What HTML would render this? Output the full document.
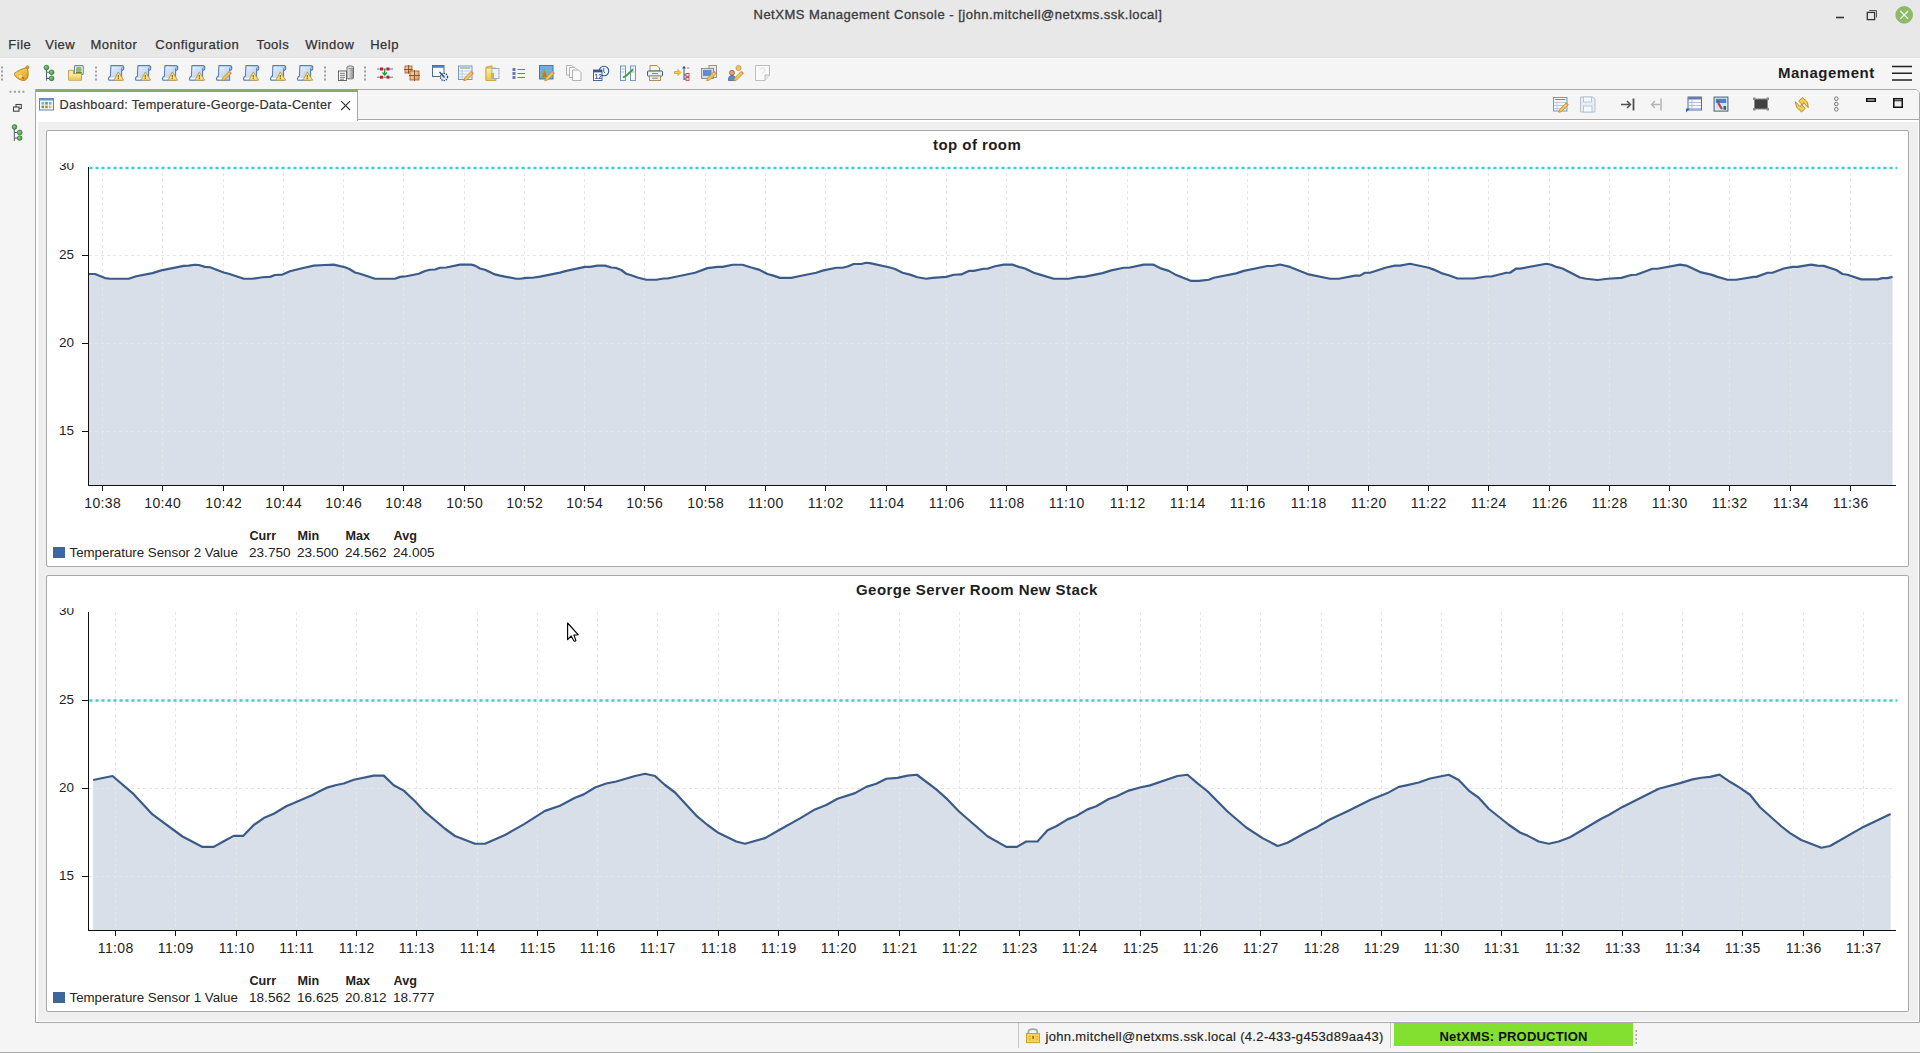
<!DOCTYPE html>
<html><head><meta charset="utf-8"><title>NetXMS</title>
<style>
*{margin:0;padding:0;box-sizing:border-box}
html,body{width:1920px;height:1053px;overflow:hidden;background:#f5f5f5;font-family:"Liberation Sans",sans-serif;color:#333}
.a{position:absolute}
.t{position:absolute;white-space:pre;line-height:1}
</style></head><body>

<div class="a" style="left:0;top:0;width:1920px;height:58px;background:#e8e8e8"></div>
<div class="t" style="left:753.5px;top:8.4px;font-size:13px;color:#3d3d3d;-webkit-text-stroke:0.35px #3d3d3d;letter-spacing:0.5px">NetXMS Management Console - [john.mitchell@netxms.ssk.local]</div>
<div class="t" style="left:8.3px;top:37.6px;font-size:13px;letter-spacing:0.5px;color:#333;-webkit-text-stroke:0.25px #333">File</div>
<div class="t" style="left:45.3px;top:37.6px;font-size:13px;letter-spacing:0.5px;color:#333;-webkit-text-stroke:0.25px #333">View</div>
<div class="t" style="left:90.4px;top:37.6px;font-size:13px;letter-spacing:0.5px;color:#333;-webkit-text-stroke:0.25px #333">Monitor</div>
<div class="t" style="left:155.3px;top:37.6px;font-size:13px;letter-spacing:0.5px;color:#333;-webkit-text-stroke:0.25px #333">Configuration</div>
<div class="t" style="left:256.4px;top:37.6px;font-size:13px;letter-spacing:0.5px;color:#333;-webkit-text-stroke:0.25px #333">Tools</div>
<div class="t" style="left:305.2px;top:37.6px;font-size:13px;letter-spacing:0.5px;color:#333;-webkit-text-stroke:0.25px #333">Window</div>
<div class="t" style="left:370.2px;top:37.6px;font-size:13px;letter-spacing:0.5px;color:#333;-webkit-text-stroke:0.25px #333">Help</div>
<div class="a" style="left:0;top:58px;width:1920px;height:31px;background:#f5f5f5"></div>
<div class="a" style="left:0;top:57px;width:1920px;height:1px;background:#e4e4e4"></div>
<div class="a" style="left:0;top:58px;width:1920px;height:1px;background:#f9f9f9"></div>
<div class="t" style="left:1778px;top:65px;font-size:15px;font-weight:bold;color:#1e1e1e;letter-spacing:0.5px">Management</div>
<div class="a" style="left:35px;top:89px;width:1885px;height:934px;border:1px solid #a8a8a8;border-radius:0 5px 0 0;background:#efefef"></div>
<div class="a" style="left:36px;top:90px;width:1883px;height:30px;background:#f5f5f5;border-bottom:1px solid #a8a8a8;border-radius:0 4px 0 0"></div>
<div class="a" style="left:36px;top:120px;width:1882px;height:2px;background:#fff"></div>
<div class="a" style="left:36px;top:120px;width:2px;height:902px;background:#fff"></div>
<div class="a" style="left:1918px;top:120px;width:1px;height:902px;background:#fff"></div>
<div class="a" style="left:36px;top:1021px;width:1883px;height:1px;background:#fff"></div>
<div class="a" style="left:36px;top:90px;width:322px;height:31px;background:#fff;border-right:1px solid #a8a8a8"></div>
<div class="a" style="left:36px;top:89px;width:322px;height:3px;background:#8aab6c"></div>
<div class="t" style="left:59.5px;top:99px;font-size:12.7px;letter-spacing:0.3px;color:#333;-webkit-text-stroke:0.2px #333">Dashboard: Temperature-George-Data-Center</div>
<div class="a" style="left:46px;top:130px;width:1863px;height:437px;background:#fff;border:1px solid #a9a9a9;border-radius:2px"></div>
<div class="t" style="left:933px;top:136.5px;font-size:15px;font-weight:bold;color:#1e1e1e;letter-spacing:0.45px">top of room</div>
<svg class="a" style="left:0;top:0" width="1920" height="1053" viewBox="0 0 1920 1053"><path d="M89,485 L89.00,274.00 L95.00,274.00 L105.00,278.10 L110.00,278.75 L128.75,278.75 L136.25,276.25 L152.50,273.10 L161.25,270.40 L183.75,265.90 L188.75,265.60 L195.00,264.75 L198.75,265.00 L205.00,266.90 L210.00,267.25 L223.75,272.50 L228.75,273.75 L243.75,278.75 L252.50,278.75 L262.50,277.25 L270.00,276.90 L275.00,275.00 L282.50,274.60 L290.00,271.25 L300.00,268.75 L313.75,265.60 L325.00,265.00 L333.75,264.60 L345.00,267.25 L349.40,269.00 L355.00,272.50 L360.00,273.75 L375.00,278.75 L395.00,278.75 L400.00,276.90 L406.25,276.25 L418.75,273.75 L425.00,271.00 L430.00,269.75 L435.00,269.50 L440.00,267.75 L446.25,267.50 L460.00,264.60 L471.25,264.60 L475.00,265.60 L480.00,268.50 L485.00,269.75 L495.00,274.40 L500.00,275.60 L516.25,278.75 L520.00,278.75 L526.25,277.90 L532.50,277.75 L540.00,276.60 L560.00,272.60 L566.25,270.90 L585.00,266.90 L590.00,266.90 L597.50,265.60 L605.00,265.60 L611.25,267.50 L616.25,267.90 L621.25,270.00 L626.25,273.75 L631.25,275.25 L637.50,277.50 L646.25,279.75 L656.25,279.75 L663.75,278.50 L667.50,278.50 L695.00,272.75 L707.50,268.10 L717.50,266.90 L722.50,266.90 L732.50,264.75 L742.50,264.75 L751.25,267.50 L758.75,269.60 L767.50,274.00 L772.50,275.40 L780.00,277.90 L791.25,277.90 L800.00,276.00 L816.25,272.75 L822.50,270.60 L836.25,267.75 L842.50,267.75 L847.50,266.50 L853.75,264.00 L861.25,264.00 L866.25,262.75 L870.00,263.10 L890.00,267.50 L895.00,269.00 L902.50,272.75 L910.00,274.60 L917.50,277.25 L926.25,278.75 L932.50,277.90 L946.25,276.90 L953.75,274.75 L961.25,274.40 L968.75,270.90 L973.75,270.90 L983.75,268.75 L987.50,268.75 L995.00,266.25 L1003.75,264.60 L1012.50,264.60 L1018.75,266.90 L1025.00,268.50 L1033.75,272.75 L1040.00,274.60 L1053.75,278.75 L1068.75,278.75 L1078.75,276.90 L1083.75,276.90 L1102.50,273.10 L1111.25,270.40 L1123.75,267.75 L1128.75,267.75 L1143.75,264.60 L1153.10,264.60 L1160.00,268.10 L1168.75,270.90 L1175.00,274.40 L1191.25,280.90 L1198.75,280.90 L1208.75,279.75 L1213.75,277.75 L1236.25,273.40 L1243.75,270.90 L1267.50,266.00 L1272.50,266.00 L1280.00,264.50 L1290.00,266.90 L1308.75,274.40 L1330.00,278.75 L1338.75,278.75 L1355.00,275.60 L1360.00,275.60 L1365.00,272.75 L1370.00,272.75 L1386.25,267.50 L1395.00,265.60 L1400.00,265.60 L1410.00,263.75 L1428.75,267.75 L1433.75,269.60 L1441.25,273.10 L1448.75,275.25 L1457.50,278.50 L1473.75,278.50 L1486.25,276.50 L1491.25,276.50 L1506.25,272.75 L1510.00,272.75 L1516.25,268.50 L1520.00,268.70 L1546.25,263.75 L1551.25,264.75 L1556.25,266.90 L1562.50,268.50 L1580.00,277.50 L1586.25,278.75 L1597.50,280.00 L1607.50,278.75 L1621.25,277.90 L1631.25,275.00 L1636.25,274.75 L1652.50,268.75 L1657.50,268.75 L1680.00,264.60 L1686.25,265.60 L1701.25,272.40 L1711.25,274.60 L1717.50,276.90 L1727.50,279.75 L1736.25,279.75 L1753.75,276.90 L1756.25,276.90 L1767.50,272.75 L1772.50,272.75 L1783.75,268.50 L1792.50,266.90 L1797.50,266.90 L1805.00,265.60 L1811.25,264.60 L1817.50,265.60 L1823.75,265.90 L1836.25,270.00 L1842.50,274.00 L1847.50,274.75 L1861.25,279.40 L1877.50,279.40 L1882.50,278.10 L1887.50,278.10 L1892.50,276.90 L1892.5,485 Z" fill="#d8dfe9" stroke="none"/><line x1="89" y1="431.5" x2="1893" y2="431.5" stroke="#e6e6e6" stroke-width="1" stroke-dasharray="3,3"/><line x1="89" y1="343.5" x2="1893" y2="343.5" stroke="#e6e6e6" stroke-width="1" stroke-dasharray="3,3"/><line x1="89" y1="255.5" x2="1893" y2="255.5" stroke="#e6e6e6" stroke-width="1" stroke-dasharray="3,3"/><line x1="102.5" y1="167" x2="102.5" y2="485" stroke="#e6e6e6" stroke-width="1" stroke-dasharray="3,3"/><line x1="162.5" y1="167" x2="162.5" y2="485" stroke="#e6e6e6" stroke-width="1" stroke-dasharray="3,3"/><line x1="223.5" y1="167" x2="223.5" y2="485" stroke="#e6e6e6" stroke-width="1" stroke-dasharray="3,3"/><line x1="283.5" y1="167" x2="283.5" y2="485" stroke="#e6e6e6" stroke-width="1" stroke-dasharray="3,3"/><line x1="343.5" y1="167" x2="343.5" y2="485" stroke="#e6e6e6" stroke-width="1" stroke-dasharray="3,3"/><line x1="403.5" y1="167" x2="403.5" y2="485" stroke="#e6e6e6" stroke-width="1" stroke-dasharray="3,3"/><line x1="464.5" y1="167" x2="464.5" y2="485" stroke="#e6e6e6" stroke-width="1" stroke-dasharray="3,3"/><line x1="524.5" y1="167" x2="524.5" y2="485" stroke="#e6e6e6" stroke-width="1" stroke-dasharray="3,3"/><line x1="584.5" y1="167" x2="584.5" y2="485" stroke="#e6e6e6" stroke-width="1" stroke-dasharray="3,3"/><line x1="644.5" y1="167" x2="644.5" y2="485" stroke="#e6e6e6" stroke-width="1" stroke-dasharray="3,3"/><line x1="705.5" y1="167" x2="705.5" y2="485" stroke="#e6e6e6" stroke-width="1" stroke-dasharray="3,3"/><line x1="765.5" y1="167" x2="765.5" y2="485" stroke="#e6e6e6" stroke-width="1" stroke-dasharray="3,3"/><line x1="825.5" y1="167" x2="825.5" y2="485" stroke="#e6e6e6" stroke-width="1" stroke-dasharray="3,3"/><line x1="886.5" y1="167" x2="886.5" y2="485" stroke="#e6e6e6" stroke-width="1" stroke-dasharray="3,3"/><line x1="946.5" y1="167" x2="946.5" y2="485" stroke="#e6e6e6" stroke-width="1" stroke-dasharray="3,3"/><line x1="1006.5" y1="167" x2="1006.5" y2="485" stroke="#e6e6e6" stroke-width="1" stroke-dasharray="3,3"/><line x1="1066.5" y1="167" x2="1066.5" y2="485" stroke="#e6e6e6" stroke-width="1" stroke-dasharray="3,3"/><line x1="1127.5" y1="167" x2="1127.5" y2="485" stroke="#e6e6e6" stroke-width="1" stroke-dasharray="3,3"/><line x1="1187.5" y1="167" x2="1187.5" y2="485" stroke="#e6e6e6" stroke-width="1" stroke-dasharray="3,3"/><line x1="1247.5" y1="167" x2="1247.5" y2="485" stroke="#e6e6e6" stroke-width="1" stroke-dasharray="3,3"/><line x1="1308.5" y1="167" x2="1308.5" y2="485" stroke="#e6e6e6" stroke-width="1" stroke-dasharray="3,3"/><line x1="1368.5" y1="167" x2="1368.5" y2="485" stroke="#e6e6e6" stroke-width="1" stroke-dasharray="3,3"/><line x1="1428.5" y1="167" x2="1428.5" y2="485" stroke="#e6e6e6" stroke-width="1" stroke-dasharray="3,3"/><line x1="1488.5" y1="167" x2="1488.5" y2="485" stroke="#e6e6e6" stroke-width="1" stroke-dasharray="3,3"/><line x1="1549.5" y1="167" x2="1549.5" y2="485" stroke="#e6e6e6" stroke-width="1" stroke-dasharray="3,3"/><line x1="1609.5" y1="167" x2="1609.5" y2="485" stroke="#e6e6e6" stroke-width="1" stroke-dasharray="3,3"/><line x1="1669.5" y1="167" x2="1669.5" y2="485" stroke="#e6e6e6" stroke-width="1" stroke-dasharray="3,3"/><line x1="1729.5" y1="167" x2="1729.5" y2="485" stroke="#e6e6e6" stroke-width="1" stroke-dasharray="3,3"/><line x1="1790.5" y1="167" x2="1790.5" y2="485" stroke="#e6e6e6" stroke-width="1" stroke-dasharray="3,3"/><line x1="1850.5" y1="167" x2="1850.5" y2="485" stroke="#e6e6e6" stroke-width="1" stroke-dasharray="3,3"/><path d="M89.00,274.00 L95.00,274.00 L105.00,278.10 L110.00,278.75 L128.75,278.75 L136.25,276.25 L152.50,273.10 L161.25,270.40 L183.75,265.90 L188.75,265.60 L195.00,264.75 L198.75,265.00 L205.00,266.90 L210.00,267.25 L223.75,272.50 L228.75,273.75 L243.75,278.75 L252.50,278.75 L262.50,277.25 L270.00,276.90 L275.00,275.00 L282.50,274.60 L290.00,271.25 L300.00,268.75 L313.75,265.60 L325.00,265.00 L333.75,264.60 L345.00,267.25 L349.40,269.00 L355.00,272.50 L360.00,273.75 L375.00,278.75 L395.00,278.75 L400.00,276.90 L406.25,276.25 L418.75,273.75 L425.00,271.00 L430.00,269.75 L435.00,269.50 L440.00,267.75 L446.25,267.50 L460.00,264.60 L471.25,264.60 L475.00,265.60 L480.00,268.50 L485.00,269.75 L495.00,274.40 L500.00,275.60 L516.25,278.75 L520.00,278.75 L526.25,277.90 L532.50,277.75 L540.00,276.60 L560.00,272.60 L566.25,270.90 L585.00,266.90 L590.00,266.90 L597.50,265.60 L605.00,265.60 L611.25,267.50 L616.25,267.90 L621.25,270.00 L626.25,273.75 L631.25,275.25 L637.50,277.50 L646.25,279.75 L656.25,279.75 L663.75,278.50 L667.50,278.50 L695.00,272.75 L707.50,268.10 L717.50,266.90 L722.50,266.90 L732.50,264.75 L742.50,264.75 L751.25,267.50 L758.75,269.60 L767.50,274.00 L772.50,275.40 L780.00,277.90 L791.25,277.90 L800.00,276.00 L816.25,272.75 L822.50,270.60 L836.25,267.75 L842.50,267.75 L847.50,266.50 L853.75,264.00 L861.25,264.00 L866.25,262.75 L870.00,263.10 L890.00,267.50 L895.00,269.00 L902.50,272.75 L910.00,274.60 L917.50,277.25 L926.25,278.75 L932.50,277.90 L946.25,276.90 L953.75,274.75 L961.25,274.40 L968.75,270.90 L973.75,270.90 L983.75,268.75 L987.50,268.75 L995.00,266.25 L1003.75,264.60 L1012.50,264.60 L1018.75,266.90 L1025.00,268.50 L1033.75,272.75 L1040.00,274.60 L1053.75,278.75 L1068.75,278.75 L1078.75,276.90 L1083.75,276.90 L1102.50,273.10 L1111.25,270.40 L1123.75,267.75 L1128.75,267.75 L1143.75,264.60 L1153.10,264.60 L1160.00,268.10 L1168.75,270.90 L1175.00,274.40 L1191.25,280.90 L1198.75,280.90 L1208.75,279.75 L1213.75,277.75 L1236.25,273.40 L1243.75,270.90 L1267.50,266.00 L1272.50,266.00 L1280.00,264.50 L1290.00,266.90 L1308.75,274.40 L1330.00,278.75 L1338.75,278.75 L1355.00,275.60 L1360.00,275.60 L1365.00,272.75 L1370.00,272.75 L1386.25,267.50 L1395.00,265.60 L1400.00,265.60 L1410.00,263.75 L1428.75,267.75 L1433.75,269.60 L1441.25,273.10 L1448.75,275.25 L1457.50,278.50 L1473.75,278.50 L1486.25,276.50 L1491.25,276.50 L1506.25,272.75 L1510.00,272.75 L1516.25,268.50 L1520.00,268.70 L1546.25,263.75 L1551.25,264.75 L1556.25,266.90 L1562.50,268.50 L1580.00,277.50 L1586.25,278.75 L1597.50,280.00 L1607.50,278.75 L1621.25,277.90 L1631.25,275.00 L1636.25,274.75 L1652.50,268.75 L1657.50,268.75 L1680.00,264.60 L1686.25,265.60 L1701.25,272.40 L1711.25,274.60 L1717.50,276.90 L1727.50,279.75 L1736.25,279.75 L1753.75,276.90 L1756.25,276.90 L1767.50,272.75 L1772.50,272.75 L1783.75,268.50 L1792.50,266.90 L1797.50,266.90 L1805.00,265.60 L1811.25,264.60 L1817.50,265.60 L1823.75,265.90 L1836.25,270.00 L1842.50,274.00 L1847.50,274.75 L1861.25,279.40 L1877.50,279.40 L1882.50,278.10 L1887.50,278.10 L1892.50,276.90" fill="none" stroke="#3a5b88" stroke-width="2.2" stroke-linejoin="round"/><line x1="89.5" y1="168" x2="1897" y2="168" stroke="#30d2d6" stroke-width="2.4" stroke-dasharray="3,3"/><line x1="88.5" y1="167" x2="88.5" y2="486" stroke="#111" stroke-width="1"/><line x1="88" y1="485.5" x2="1896" y2="485.5" stroke="#111" stroke-width="1"/><line x1="82" y1="431.5" x2="88" y2="431.5" stroke="#111" stroke-width="1"/><line x1="82" y1="343.5" x2="88" y2="343.5" stroke="#111" stroke-width="1"/><line x1="82" y1="255.5" x2="88" y2="255.5" stroke="#111" stroke-width="1"/><line x1="102.5" y1="485" x2="102.5" y2="491" stroke="#111" stroke-width="1"/><line x1="162.5" y1="485" x2="162.5" y2="491" stroke="#111" stroke-width="1"/><line x1="223.5" y1="485" x2="223.5" y2="491" stroke="#111" stroke-width="1"/><line x1="283.5" y1="485" x2="283.5" y2="491" stroke="#111" stroke-width="1"/><line x1="343.5" y1="485" x2="343.5" y2="491" stroke="#111" stroke-width="1"/><line x1="403.5" y1="485" x2="403.5" y2="491" stroke="#111" stroke-width="1"/><line x1="464.5" y1="485" x2="464.5" y2="491" stroke="#111" stroke-width="1"/><line x1="524.5" y1="485" x2="524.5" y2="491" stroke="#111" stroke-width="1"/><line x1="584.5" y1="485" x2="584.5" y2="491" stroke="#111" stroke-width="1"/><line x1="644.5" y1="485" x2="644.5" y2="491" stroke="#111" stroke-width="1"/><line x1="705.5" y1="485" x2="705.5" y2="491" stroke="#111" stroke-width="1"/><line x1="765.5" y1="485" x2="765.5" y2="491" stroke="#111" stroke-width="1"/><line x1="825.5" y1="485" x2="825.5" y2="491" stroke="#111" stroke-width="1"/><line x1="886.5" y1="485" x2="886.5" y2="491" stroke="#111" stroke-width="1"/><line x1="946.5" y1="485" x2="946.5" y2="491" stroke="#111" stroke-width="1"/><line x1="1006.5" y1="485" x2="1006.5" y2="491" stroke="#111" stroke-width="1"/><line x1="1066.5" y1="485" x2="1066.5" y2="491" stroke="#111" stroke-width="1"/><line x1="1127.5" y1="485" x2="1127.5" y2="491" stroke="#111" stroke-width="1"/><line x1="1187.5" y1="485" x2="1187.5" y2="491" stroke="#111" stroke-width="1"/><line x1="1247.5" y1="485" x2="1247.5" y2="491" stroke="#111" stroke-width="1"/><line x1="1308.5" y1="485" x2="1308.5" y2="491" stroke="#111" stroke-width="1"/><line x1="1368.5" y1="485" x2="1368.5" y2="491" stroke="#111" stroke-width="1"/><line x1="1428.5" y1="485" x2="1428.5" y2="491" stroke="#111" stroke-width="1"/><line x1="1488.5" y1="485" x2="1488.5" y2="491" stroke="#111" stroke-width="1"/><line x1="1549.5" y1="485" x2="1549.5" y2="491" stroke="#111" stroke-width="1"/><line x1="1609.5" y1="485" x2="1609.5" y2="491" stroke="#111" stroke-width="1"/><line x1="1669.5" y1="485" x2="1669.5" y2="491" stroke="#111" stroke-width="1"/><line x1="1729.5" y1="485" x2="1729.5" y2="491" stroke="#111" stroke-width="1"/><line x1="1790.5" y1="485" x2="1790.5" y2="491" stroke="#111" stroke-width="1"/><line x1="1850.5" y1="485" x2="1850.5" y2="491" stroke="#111" stroke-width="1"/></svg>
<div class="t" style="left:59px;top:424.0px;font-size:13.5px;color:#1e1e1e">15</div>
<div class="t" style="left:59px;top:336.0px;font-size:13.5px;color:#1e1e1e">20</div>
<div class="t" style="left:59px;top:248.0px;font-size:13.5px;color:#1e1e1e">25</div>
<div class="a" style="left:55px;top:162.5px;width:30px;height:12px;overflow:hidden"><div class="t" style="left:4px;top:-3.6px;font-size:13.5px;color:#1e1e1e">30</div></div>
<div class="t" style="left:82.5px;top:496px;width:40px;text-align:center;font-size:14px;letter-spacing:0.35px;text-indent:0.35px;color:#1e1e1e">10:38</div>
<div class="t" style="left:142.5px;top:496px;width:40px;text-align:center;font-size:14px;letter-spacing:0.35px;text-indent:0.35px;color:#1e1e1e">10:40</div>
<div class="t" style="left:203.5px;top:496px;width:40px;text-align:center;font-size:14px;letter-spacing:0.35px;text-indent:0.35px;color:#1e1e1e">10:42</div>
<div class="t" style="left:263.5px;top:496px;width:40px;text-align:center;font-size:14px;letter-spacing:0.35px;text-indent:0.35px;color:#1e1e1e">10:44</div>
<div class="t" style="left:323.5px;top:496px;width:40px;text-align:center;font-size:14px;letter-spacing:0.35px;text-indent:0.35px;color:#1e1e1e">10:46</div>
<div class="t" style="left:383.5px;top:496px;width:40px;text-align:center;font-size:14px;letter-spacing:0.35px;text-indent:0.35px;color:#1e1e1e">10:48</div>
<div class="t" style="left:444.5px;top:496px;width:40px;text-align:center;font-size:14px;letter-spacing:0.35px;text-indent:0.35px;color:#1e1e1e">10:50</div>
<div class="t" style="left:504.5px;top:496px;width:40px;text-align:center;font-size:14px;letter-spacing:0.35px;text-indent:0.35px;color:#1e1e1e">10:52</div>
<div class="t" style="left:564.5px;top:496px;width:40px;text-align:center;font-size:14px;letter-spacing:0.35px;text-indent:0.35px;color:#1e1e1e">10:54</div>
<div class="t" style="left:624.5px;top:496px;width:40px;text-align:center;font-size:14px;letter-spacing:0.35px;text-indent:0.35px;color:#1e1e1e">10:56</div>
<div class="t" style="left:685.5px;top:496px;width:40px;text-align:center;font-size:14px;letter-spacing:0.35px;text-indent:0.35px;color:#1e1e1e">10:58</div>
<div class="t" style="left:745.5px;top:496px;width:40px;text-align:center;font-size:14px;letter-spacing:0.35px;text-indent:0.35px;color:#1e1e1e">11:00</div>
<div class="t" style="left:805.5px;top:496px;width:40px;text-align:center;font-size:14px;letter-spacing:0.35px;text-indent:0.35px;color:#1e1e1e">11:02</div>
<div class="t" style="left:866.5px;top:496px;width:40px;text-align:center;font-size:14px;letter-spacing:0.35px;text-indent:0.35px;color:#1e1e1e">11:04</div>
<div class="t" style="left:926.5px;top:496px;width:40px;text-align:center;font-size:14px;letter-spacing:0.35px;text-indent:0.35px;color:#1e1e1e">11:06</div>
<div class="t" style="left:986.5px;top:496px;width:40px;text-align:center;font-size:14px;letter-spacing:0.35px;text-indent:0.35px;color:#1e1e1e">11:08</div>
<div class="t" style="left:1046.5px;top:496px;width:40px;text-align:center;font-size:14px;letter-spacing:0.35px;text-indent:0.35px;color:#1e1e1e">11:10</div>
<div class="t" style="left:1107.5px;top:496px;width:40px;text-align:center;font-size:14px;letter-spacing:0.35px;text-indent:0.35px;color:#1e1e1e">11:12</div>
<div class="t" style="left:1167.5px;top:496px;width:40px;text-align:center;font-size:14px;letter-spacing:0.35px;text-indent:0.35px;color:#1e1e1e">11:14</div>
<div class="t" style="left:1227.5px;top:496px;width:40px;text-align:center;font-size:14px;letter-spacing:0.35px;text-indent:0.35px;color:#1e1e1e">11:16</div>
<div class="t" style="left:1288.5px;top:496px;width:40px;text-align:center;font-size:14px;letter-spacing:0.35px;text-indent:0.35px;color:#1e1e1e">11:18</div>
<div class="t" style="left:1348.5px;top:496px;width:40px;text-align:center;font-size:14px;letter-spacing:0.35px;text-indent:0.35px;color:#1e1e1e">11:20</div>
<div class="t" style="left:1408.5px;top:496px;width:40px;text-align:center;font-size:14px;letter-spacing:0.35px;text-indent:0.35px;color:#1e1e1e">11:22</div>
<div class="t" style="left:1468.5px;top:496px;width:40px;text-align:center;font-size:14px;letter-spacing:0.35px;text-indent:0.35px;color:#1e1e1e">11:24</div>
<div class="t" style="left:1529.5px;top:496px;width:40px;text-align:center;font-size:14px;letter-spacing:0.35px;text-indent:0.35px;color:#1e1e1e">11:26</div>
<div class="t" style="left:1589.5px;top:496px;width:40px;text-align:center;font-size:14px;letter-spacing:0.35px;text-indent:0.35px;color:#1e1e1e">11:28</div>
<div class="t" style="left:1649.5px;top:496px;width:40px;text-align:center;font-size:14px;letter-spacing:0.35px;text-indent:0.35px;color:#1e1e1e">11:30</div>
<div class="t" style="left:1709.5px;top:496px;width:40px;text-align:center;font-size:14px;letter-spacing:0.35px;text-indent:0.35px;color:#1e1e1e">11:32</div>
<div class="t" style="left:1770.5px;top:496px;width:40px;text-align:center;font-size:14px;letter-spacing:0.35px;text-indent:0.35px;color:#1e1e1e">11:34</div>
<div class="t" style="left:1830.5px;top:496px;width:40px;text-align:center;font-size:14px;letter-spacing:0.35px;text-indent:0.35px;color:#1e1e1e">11:36</div>
<div class="a" style="left:53px;top:547px;width:12px;height:11px;background:#3d679c"></div>
<div class="t" style="left:69.5px;top:546px;font-size:13.3px;color:#222">Temperature Sensor 2 Value</div>
<div class="t" style="left:249.5px;top:530px;font-size:12.6px;font-weight:bold;color:#222">Curr</div>
<div class="t" style="left:249.0px;top:546px;font-size:13.6px;color:#222">23.750</div>
<div class="t" style="left:297.5px;top:530px;font-size:12.6px;font-weight:bold;color:#222">Min</div>
<div class="t" style="left:297.0px;top:546px;font-size:13.6px;color:#222">23.500</div>
<div class="t" style="left:345.5px;top:530px;font-size:12.6px;font-weight:bold;color:#222">Max</div>
<div class="t" style="left:345.0px;top:546px;font-size:13.6px;color:#222">24.562</div>
<div class="t" style="left:393.5px;top:530px;font-size:12.6px;font-weight:bold;color:#222">Avg</div>
<div class="t" style="left:393.0px;top:546px;font-size:13.6px;color:#222">24.005</div>
<div class="a" style="left:46px;top:575px;width:1863px;height:437px;background:#fff;border:1px solid #a9a9a9;border-radius:2px"></div>
<div class="t" style="left:856px;top:581.5px;font-size:15px;font-weight:bold;color:#1e1e1e;letter-spacing:0.45px">George Server Room New Stack</div>
<svg class="a" style="left:0;top:0" width="1920" height="1053" viewBox="0 0 1920 1053"><path d="M93.1,930 L93.10,780.00 L112.50,776.00 L132.50,793.10 L152.50,814.40 L157.50,818.10 L182.50,836.50 L202.50,846.90 L213.75,846.90 L223.75,841.25 L233.75,835.90 L243.10,835.90 L253.75,825.00 L263.75,818.10 L273.75,813.75 L286.25,806.25 L296.25,801.90 L312.50,795.00 L320.00,791.10 L326.25,787.90 L336.25,785.00 L343.75,783.50 L353.75,779.75 L373.75,775.60 L383.75,775.60 L393.75,785.25 L403.75,790.60 L415.00,801.25 L425.00,811.90 L445.00,828.75 L455.00,836.00 L475.00,843.75 L485.00,843.75 L505.00,835.00 L523.75,824.40 L545.00,810.90 L560.00,805.70 L575.00,797.75 L583.75,794.40 L595.00,787.50 L606.25,783.50 L616.25,781.50 L635.00,776.00 L645.00,773.75 L655.00,776.00 L665.00,785.00 L675.00,792.50 L696.25,815.60 L707.50,825.00 L718.75,833.10 L736.25,841.50 L745.00,843.75 L765.00,838.10 L778.75,830.25 L800.00,818.40 L815.00,809.40 L826.25,805.00 L837.50,798.75 L855.00,793.10 L866.25,786.90 L876.25,783.75 L886.25,778.75 L897.50,777.90 L907.50,775.60 L916.90,774.75 L936.25,789.40 L947.50,799.40 L958.75,811.25 L987.50,836.25 L1006.25,846.90 L1016.90,846.90 L1026.25,841.50 L1037.50,841.50 L1040.00,838.60 L1047.50,830.25 L1056.25,826.25 L1067.50,819.40 L1076.25,816.00 L1087.50,809.40 L1096.25,806.25 L1108.75,799.00 L1116.25,796.50 L1128.75,790.60 L1140.00,787.50 L1150.00,785.40 L1177.50,776.00 L1187.50,774.75 L1198.75,784.40 L1207.50,791.25 L1227.50,811.50 L1246.25,827.50 L1262.50,838.10 L1277.50,846.00 L1280.00,845.30 L1287.50,842.75 L1308.75,831.00 L1317.50,826.90 L1328.75,820.00 L1347.50,811.25 L1370.00,800.00 L1387.50,793.10 L1398.75,786.90 L1405.00,785.60 L1418.75,782.50 L1430.00,778.50 L1448.75,774.75 L1458.75,780.00 L1468.75,790.60 L1478.75,797.75 L1488.75,808.75 L1508.75,824.75 L1520.00,832.50 L1527.50,835.60 L1538.75,841.50 L1548.75,843.75 L1558.75,841.50 L1570.00,837.25 L1601.25,818.75 L1608.75,815.00 L1622.50,806.90 L1658.75,788.75 L1680.00,783.10 L1692.50,779.40 L1701.25,777.75 L1710.00,776.90 L1719.40,774.60 L1730.00,781.80 L1740.00,787.90 L1750.00,794.75 L1760.00,807.20 L1781.25,826.25 L1790.00,833.10 L1801.25,840.00 L1821.25,847.75 L1830.00,846.00 L1861.25,828.10 L1890.60,814.00 L1890.6,930 Z" fill="#d8dfe9" stroke="none"/><line x1="89" y1="876.5" x2="1893" y2="876.5" stroke="#e6e6e6" stroke-width="1" stroke-dasharray="3,3"/><line x1="89" y1="788.5" x2="1893" y2="788.5" stroke="#e6e6e6" stroke-width="1" stroke-dasharray="3,3"/><line x1="89" y1="700.5" x2="1893" y2="700.5" stroke="#e6e6e6" stroke-width="1" stroke-dasharray="3,3"/><line x1="115.5" y1="612" x2="115.5" y2="930" stroke="#e6e6e6" stroke-width="1" stroke-dasharray="3,3"/><line x1="175.5" y1="612" x2="175.5" y2="930" stroke="#e6e6e6" stroke-width="1" stroke-dasharray="3,3"/><line x1="236.5" y1="612" x2="236.5" y2="930" stroke="#e6e6e6" stroke-width="1" stroke-dasharray="3,3"/><line x1="296.5" y1="612" x2="296.5" y2="930" stroke="#e6e6e6" stroke-width="1" stroke-dasharray="3,3"/><line x1="356.5" y1="612" x2="356.5" y2="930" stroke="#e6e6e6" stroke-width="1" stroke-dasharray="3,3"/><line x1="416.5" y1="612" x2="416.5" y2="930" stroke="#e6e6e6" stroke-width="1" stroke-dasharray="3,3"/><line x1="477.5" y1="612" x2="477.5" y2="930" stroke="#e6e6e6" stroke-width="1" stroke-dasharray="3,3"/><line x1="537.5" y1="612" x2="537.5" y2="930" stroke="#e6e6e6" stroke-width="1" stroke-dasharray="3,3"/><line x1="597.5" y1="612" x2="597.5" y2="930" stroke="#e6e6e6" stroke-width="1" stroke-dasharray="3,3"/><line x1="657.5" y1="612" x2="657.5" y2="930" stroke="#e6e6e6" stroke-width="1" stroke-dasharray="3,3"/><line x1="718.5" y1="612" x2="718.5" y2="930" stroke="#e6e6e6" stroke-width="1" stroke-dasharray="3,3"/><line x1="778.5" y1="612" x2="778.5" y2="930" stroke="#e6e6e6" stroke-width="1" stroke-dasharray="3,3"/><line x1="838.5" y1="612" x2="838.5" y2="930" stroke="#e6e6e6" stroke-width="1" stroke-dasharray="3,3"/><line x1="899.5" y1="612" x2="899.5" y2="930" stroke="#e6e6e6" stroke-width="1" stroke-dasharray="3,3"/><line x1="959.5" y1="612" x2="959.5" y2="930" stroke="#e6e6e6" stroke-width="1" stroke-dasharray="3,3"/><line x1="1019.5" y1="612" x2="1019.5" y2="930" stroke="#e6e6e6" stroke-width="1" stroke-dasharray="3,3"/><line x1="1079.5" y1="612" x2="1079.5" y2="930" stroke="#e6e6e6" stroke-width="1" stroke-dasharray="3,3"/><line x1="1140.5" y1="612" x2="1140.5" y2="930" stroke="#e6e6e6" stroke-width="1" stroke-dasharray="3,3"/><line x1="1200.5" y1="612" x2="1200.5" y2="930" stroke="#e6e6e6" stroke-width="1" stroke-dasharray="3,3"/><line x1="1260.5" y1="612" x2="1260.5" y2="930" stroke="#e6e6e6" stroke-width="1" stroke-dasharray="3,3"/><line x1="1321.5" y1="612" x2="1321.5" y2="930" stroke="#e6e6e6" stroke-width="1" stroke-dasharray="3,3"/><line x1="1381.5" y1="612" x2="1381.5" y2="930" stroke="#e6e6e6" stroke-width="1" stroke-dasharray="3,3"/><line x1="1441.5" y1="612" x2="1441.5" y2="930" stroke="#e6e6e6" stroke-width="1" stroke-dasharray="3,3"/><line x1="1501.5" y1="612" x2="1501.5" y2="930" stroke="#e6e6e6" stroke-width="1" stroke-dasharray="3,3"/><line x1="1562.5" y1="612" x2="1562.5" y2="930" stroke="#e6e6e6" stroke-width="1" stroke-dasharray="3,3"/><line x1="1622.5" y1="612" x2="1622.5" y2="930" stroke="#e6e6e6" stroke-width="1" stroke-dasharray="3,3"/><line x1="1682.5" y1="612" x2="1682.5" y2="930" stroke="#e6e6e6" stroke-width="1" stroke-dasharray="3,3"/><line x1="1742.5" y1="612" x2="1742.5" y2="930" stroke="#e6e6e6" stroke-width="1" stroke-dasharray="3,3"/><line x1="1803.5" y1="612" x2="1803.5" y2="930" stroke="#e6e6e6" stroke-width="1" stroke-dasharray="3,3"/><line x1="1863.5" y1="612" x2="1863.5" y2="930" stroke="#e6e6e6" stroke-width="1" stroke-dasharray="3,3"/><path d="M93.10,780.00 L112.50,776.00 L132.50,793.10 L152.50,814.40 L157.50,818.10 L182.50,836.50 L202.50,846.90 L213.75,846.90 L223.75,841.25 L233.75,835.90 L243.10,835.90 L253.75,825.00 L263.75,818.10 L273.75,813.75 L286.25,806.25 L296.25,801.90 L312.50,795.00 L320.00,791.10 L326.25,787.90 L336.25,785.00 L343.75,783.50 L353.75,779.75 L373.75,775.60 L383.75,775.60 L393.75,785.25 L403.75,790.60 L415.00,801.25 L425.00,811.90 L445.00,828.75 L455.00,836.00 L475.00,843.75 L485.00,843.75 L505.00,835.00 L523.75,824.40 L545.00,810.90 L560.00,805.70 L575.00,797.75 L583.75,794.40 L595.00,787.50 L606.25,783.50 L616.25,781.50 L635.00,776.00 L645.00,773.75 L655.00,776.00 L665.00,785.00 L675.00,792.50 L696.25,815.60 L707.50,825.00 L718.75,833.10 L736.25,841.50 L745.00,843.75 L765.00,838.10 L778.75,830.25 L800.00,818.40 L815.00,809.40 L826.25,805.00 L837.50,798.75 L855.00,793.10 L866.25,786.90 L876.25,783.75 L886.25,778.75 L897.50,777.90 L907.50,775.60 L916.90,774.75 L936.25,789.40 L947.50,799.40 L958.75,811.25 L987.50,836.25 L1006.25,846.90 L1016.90,846.90 L1026.25,841.50 L1037.50,841.50 L1040.00,838.60 L1047.50,830.25 L1056.25,826.25 L1067.50,819.40 L1076.25,816.00 L1087.50,809.40 L1096.25,806.25 L1108.75,799.00 L1116.25,796.50 L1128.75,790.60 L1140.00,787.50 L1150.00,785.40 L1177.50,776.00 L1187.50,774.75 L1198.75,784.40 L1207.50,791.25 L1227.50,811.50 L1246.25,827.50 L1262.50,838.10 L1277.50,846.00 L1280.00,845.30 L1287.50,842.75 L1308.75,831.00 L1317.50,826.90 L1328.75,820.00 L1347.50,811.25 L1370.00,800.00 L1387.50,793.10 L1398.75,786.90 L1405.00,785.60 L1418.75,782.50 L1430.00,778.50 L1448.75,774.75 L1458.75,780.00 L1468.75,790.60 L1478.75,797.75 L1488.75,808.75 L1508.75,824.75 L1520.00,832.50 L1527.50,835.60 L1538.75,841.50 L1548.75,843.75 L1558.75,841.50 L1570.00,837.25 L1601.25,818.75 L1608.75,815.00 L1622.50,806.90 L1658.75,788.75 L1680.00,783.10 L1692.50,779.40 L1701.25,777.75 L1710.00,776.90 L1719.40,774.60 L1730.00,781.80 L1740.00,787.90 L1750.00,794.75 L1760.00,807.20 L1781.25,826.25 L1790.00,833.10 L1801.25,840.00 L1821.25,847.75 L1830.00,846.00 L1861.25,828.10 L1890.60,814.00" fill="none" stroke="#3a5b88" stroke-width="2.2" stroke-linejoin="round"/><line x1="89.5" y1="700.5" x2="1897" y2="700.5" stroke="#30d2d6" stroke-width="2.4" stroke-dasharray="3,3"/><line x1="88.5" y1="612" x2="88.5" y2="931" stroke="#111" stroke-width="1"/><line x1="88" y1="930.5" x2="1896" y2="930.5" stroke="#111" stroke-width="1"/><line x1="82" y1="876.5" x2="88" y2="876.5" stroke="#111" stroke-width="1"/><line x1="82" y1="788.5" x2="88" y2="788.5" stroke="#111" stroke-width="1"/><line x1="82" y1="700.5" x2="88" y2="700.5" stroke="#111" stroke-width="1"/><line x1="115.5" y1="930" x2="115.5" y2="936" stroke="#111" stroke-width="1"/><line x1="175.5" y1="930" x2="175.5" y2="936" stroke="#111" stroke-width="1"/><line x1="236.5" y1="930" x2="236.5" y2="936" stroke="#111" stroke-width="1"/><line x1="296.5" y1="930" x2="296.5" y2="936" stroke="#111" stroke-width="1"/><line x1="356.5" y1="930" x2="356.5" y2="936" stroke="#111" stroke-width="1"/><line x1="416.5" y1="930" x2="416.5" y2="936" stroke="#111" stroke-width="1"/><line x1="477.5" y1="930" x2="477.5" y2="936" stroke="#111" stroke-width="1"/><line x1="537.5" y1="930" x2="537.5" y2="936" stroke="#111" stroke-width="1"/><line x1="597.5" y1="930" x2="597.5" y2="936" stroke="#111" stroke-width="1"/><line x1="657.5" y1="930" x2="657.5" y2="936" stroke="#111" stroke-width="1"/><line x1="718.5" y1="930" x2="718.5" y2="936" stroke="#111" stroke-width="1"/><line x1="778.5" y1="930" x2="778.5" y2="936" stroke="#111" stroke-width="1"/><line x1="838.5" y1="930" x2="838.5" y2="936" stroke="#111" stroke-width="1"/><line x1="899.5" y1="930" x2="899.5" y2="936" stroke="#111" stroke-width="1"/><line x1="959.5" y1="930" x2="959.5" y2="936" stroke="#111" stroke-width="1"/><line x1="1019.5" y1="930" x2="1019.5" y2="936" stroke="#111" stroke-width="1"/><line x1="1079.5" y1="930" x2="1079.5" y2="936" stroke="#111" stroke-width="1"/><line x1="1140.5" y1="930" x2="1140.5" y2="936" stroke="#111" stroke-width="1"/><line x1="1200.5" y1="930" x2="1200.5" y2="936" stroke="#111" stroke-width="1"/><line x1="1260.5" y1="930" x2="1260.5" y2="936" stroke="#111" stroke-width="1"/><line x1="1321.5" y1="930" x2="1321.5" y2="936" stroke="#111" stroke-width="1"/><line x1="1381.5" y1="930" x2="1381.5" y2="936" stroke="#111" stroke-width="1"/><line x1="1441.5" y1="930" x2="1441.5" y2="936" stroke="#111" stroke-width="1"/><line x1="1501.5" y1="930" x2="1501.5" y2="936" stroke="#111" stroke-width="1"/><line x1="1562.5" y1="930" x2="1562.5" y2="936" stroke="#111" stroke-width="1"/><line x1="1622.5" y1="930" x2="1622.5" y2="936" stroke="#111" stroke-width="1"/><line x1="1682.5" y1="930" x2="1682.5" y2="936" stroke="#111" stroke-width="1"/><line x1="1742.5" y1="930" x2="1742.5" y2="936" stroke="#111" stroke-width="1"/><line x1="1803.5" y1="930" x2="1803.5" y2="936" stroke="#111" stroke-width="1"/><line x1="1863.5" y1="930" x2="1863.5" y2="936" stroke="#111" stroke-width="1"/></svg>
<div class="t" style="left:59px;top:869.0px;font-size:13.5px;color:#1e1e1e">15</div>
<div class="t" style="left:59px;top:781.0px;font-size:13.5px;color:#1e1e1e">20</div>
<div class="t" style="left:59px;top:693.0px;font-size:13.5px;color:#1e1e1e">25</div>
<div class="a" style="left:55px;top:607.5px;width:30px;height:12px;overflow:hidden"><div class="t" style="left:4px;top:-3.6px;font-size:13.5px;color:#1e1e1e">30</div></div>
<div class="t" style="left:95.5px;top:941px;width:40px;text-align:center;font-size:14px;letter-spacing:0.35px;text-indent:0.35px;color:#1e1e1e">11:08</div>
<div class="t" style="left:155.5px;top:941px;width:40px;text-align:center;font-size:14px;letter-spacing:0.35px;text-indent:0.35px;color:#1e1e1e">11:09</div>
<div class="t" style="left:216.5px;top:941px;width:40px;text-align:center;font-size:14px;letter-spacing:0.35px;text-indent:0.35px;color:#1e1e1e">11:10</div>
<div class="t" style="left:276.5px;top:941px;width:40px;text-align:center;font-size:14px;letter-spacing:0.35px;text-indent:0.35px;color:#1e1e1e">11:11</div>
<div class="t" style="left:336.5px;top:941px;width:40px;text-align:center;font-size:14px;letter-spacing:0.35px;text-indent:0.35px;color:#1e1e1e">11:12</div>
<div class="t" style="left:396.5px;top:941px;width:40px;text-align:center;font-size:14px;letter-spacing:0.35px;text-indent:0.35px;color:#1e1e1e">11:13</div>
<div class="t" style="left:457.5px;top:941px;width:40px;text-align:center;font-size:14px;letter-spacing:0.35px;text-indent:0.35px;color:#1e1e1e">11:14</div>
<div class="t" style="left:517.5px;top:941px;width:40px;text-align:center;font-size:14px;letter-spacing:0.35px;text-indent:0.35px;color:#1e1e1e">11:15</div>
<div class="t" style="left:577.5px;top:941px;width:40px;text-align:center;font-size:14px;letter-spacing:0.35px;text-indent:0.35px;color:#1e1e1e">11:16</div>
<div class="t" style="left:637.5px;top:941px;width:40px;text-align:center;font-size:14px;letter-spacing:0.35px;text-indent:0.35px;color:#1e1e1e">11:17</div>
<div class="t" style="left:698.5px;top:941px;width:40px;text-align:center;font-size:14px;letter-spacing:0.35px;text-indent:0.35px;color:#1e1e1e">11:18</div>
<div class="t" style="left:758.5px;top:941px;width:40px;text-align:center;font-size:14px;letter-spacing:0.35px;text-indent:0.35px;color:#1e1e1e">11:19</div>
<div class="t" style="left:818.5px;top:941px;width:40px;text-align:center;font-size:14px;letter-spacing:0.35px;text-indent:0.35px;color:#1e1e1e">11:20</div>
<div class="t" style="left:879.5px;top:941px;width:40px;text-align:center;font-size:14px;letter-spacing:0.35px;text-indent:0.35px;color:#1e1e1e">11:21</div>
<div class="t" style="left:939.5px;top:941px;width:40px;text-align:center;font-size:14px;letter-spacing:0.35px;text-indent:0.35px;color:#1e1e1e">11:22</div>
<div class="t" style="left:999.5px;top:941px;width:40px;text-align:center;font-size:14px;letter-spacing:0.35px;text-indent:0.35px;color:#1e1e1e">11:23</div>
<div class="t" style="left:1059.5px;top:941px;width:40px;text-align:center;font-size:14px;letter-spacing:0.35px;text-indent:0.35px;color:#1e1e1e">11:24</div>
<div class="t" style="left:1120.5px;top:941px;width:40px;text-align:center;font-size:14px;letter-spacing:0.35px;text-indent:0.35px;color:#1e1e1e">11:25</div>
<div class="t" style="left:1180.5px;top:941px;width:40px;text-align:center;font-size:14px;letter-spacing:0.35px;text-indent:0.35px;color:#1e1e1e">11:26</div>
<div class="t" style="left:1240.5px;top:941px;width:40px;text-align:center;font-size:14px;letter-spacing:0.35px;text-indent:0.35px;color:#1e1e1e">11:27</div>
<div class="t" style="left:1301.5px;top:941px;width:40px;text-align:center;font-size:14px;letter-spacing:0.35px;text-indent:0.35px;color:#1e1e1e">11:28</div>
<div class="t" style="left:1361.5px;top:941px;width:40px;text-align:center;font-size:14px;letter-spacing:0.35px;text-indent:0.35px;color:#1e1e1e">11:29</div>
<div class="t" style="left:1421.5px;top:941px;width:40px;text-align:center;font-size:14px;letter-spacing:0.35px;text-indent:0.35px;color:#1e1e1e">11:30</div>
<div class="t" style="left:1481.5px;top:941px;width:40px;text-align:center;font-size:14px;letter-spacing:0.35px;text-indent:0.35px;color:#1e1e1e">11:31</div>
<div class="t" style="left:1542.5px;top:941px;width:40px;text-align:center;font-size:14px;letter-spacing:0.35px;text-indent:0.35px;color:#1e1e1e">11:32</div>
<div class="t" style="left:1602.5px;top:941px;width:40px;text-align:center;font-size:14px;letter-spacing:0.35px;text-indent:0.35px;color:#1e1e1e">11:33</div>
<div class="t" style="left:1662.5px;top:941px;width:40px;text-align:center;font-size:14px;letter-spacing:0.35px;text-indent:0.35px;color:#1e1e1e">11:34</div>
<div class="t" style="left:1722.5px;top:941px;width:40px;text-align:center;font-size:14px;letter-spacing:0.35px;text-indent:0.35px;color:#1e1e1e">11:35</div>
<div class="t" style="left:1783.5px;top:941px;width:40px;text-align:center;font-size:14px;letter-spacing:0.35px;text-indent:0.35px;color:#1e1e1e">11:36</div>
<div class="t" style="left:1843.5px;top:941px;width:40px;text-align:center;font-size:14px;letter-spacing:0.35px;text-indent:0.35px;color:#1e1e1e">11:37</div>
<div class="a" style="left:53px;top:992px;width:12px;height:11px;background:#3d679c"></div>
<div class="t" style="left:69.5px;top:991px;font-size:13.3px;color:#222">Temperature Sensor 1 Value</div>
<div class="t" style="left:249.5px;top:975px;font-size:12.6px;font-weight:bold;color:#222">Curr</div>
<div class="t" style="left:249.0px;top:991px;font-size:13.6px;color:#222">18.562</div>
<div class="t" style="left:297.5px;top:975px;font-size:12.6px;font-weight:bold;color:#222">Min</div>
<div class="t" style="left:297.0px;top:991px;font-size:13.6px;color:#222">16.625</div>
<div class="t" style="left:345.5px;top:975px;font-size:12.6px;font-weight:bold;color:#222">Max</div>
<div class="t" style="left:345.0px;top:991px;font-size:13.6px;color:#222">20.812</div>
<div class="t" style="left:393.5px;top:975px;font-size:12.6px;font-weight:bold;color:#222">Avg</div>
<div class="t" style="left:393.0px;top:991px;font-size:13.6px;color:#222">18.777</div>
<div class="a" style="left:0;top:1052px;width:1920px;height:1px;background:#a8a8a8"></div>
<div class="a" style="left:1018px;top:1023px;width:1px;height:25px;background:#c8c8c8"></div>
<div class="t" style="left:1045.5px;top:1029.6px;font-size:13px;letter-spacing:0.33px;color:#1e1e1e;-webkit-text-stroke:0.15px #1e1e1e">john.mitchell@netxms.ssk.local (4.2-433-g453d89aa43)</div>
<div class="a" style="left:1390px;top:1023px;width:1px;height:25px;background:#c8c8c8"></div>
<div class="a" style="left:1394px;top:1023px;width:239px;height:23px;background:#84e030"></div>
<div class="t" style="left:1439.5px;top:1030px;font-size:13px;font-weight:bold;color:#111;letter-spacing:0.2px">NetXMS: PRODUCTION</div>
<svg class="a" style="left:0;top:0" width="1920" height="100" viewBox="0 0 1920 100"><defs>
<linearGradient id="gGold" x1="0" y1="0" x2="1" y2="1"><stop offset="0" stop-color="#ffe27a"/><stop offset="1" stop-color="#d99a18"/></linearGradient>
<linearGradient id="gScroll" x1="0" y1="0" x2="1" y2="1"><stop offset="0" stop-color="#f2f7fd"/><stop offset="1" stop-color="#9fc1ec"/></linearGradient>
<linearGradient id="gFolder" x1="0" y1="0" x2="0" y2="1"><stop offset="0" stop-color="#fff0a8"/><stop offset="1" stop-color="#e8c54a"/></linearGradient>
<radialGradient id="gGreen" cx="0.4" cy="0.4" r="0.6"><stop offset="0" stop-color="#8fd08a"/><stop offset="1" stop-color="#3c8d3e"/></radialGradient>
<linearGradient id="gCyl" x1="0" y1="0" x2="1" y2="0"><stop offset="0" stop-color="#f4f4f4"/><stop offset="1" stop-color="#8a8a8a"/></linearGradient>
<linearGradient id="gTan" x1="0" y1="0" x2="1" y2="1"><stop offset="0" stop-color="#f7d3a8"/><stop offset="1" stop-color="#dba070"/></linearGradient>
</defs><rect x="1" y="66.5" width="2" height="2" fill="#a0a0a0"/><rect x="1" y="70.5" width="2" height="2" fill="#a0a0a0"/><rect x="1" y="74.5" width="2" height="2" fill="#a0a0a0"/><rect x="1" y="78.5" width="2" height="2" fill="#a0a0a0"/><g transform="translate(13.5,65)"><path d="M12.6,2.6 C9,3.8 4.2,5.8 1,8.2 C0.4,9.6 1.8,11.6 4,13.2 C6.2,14.8 9,15.8 11,15.4 C12.6,15 14.3,13.4 14.5,11 C14.8,8 14.7,5 13.8,3.4 Z" fill="url(#gGold)" stroke="#b07a14" stroke-width="0.9"/><circle cx="14" cy="2.2" r="1.5" fill="#e0a828" stroke="#a87418" stroke-width="0.7"/><ellipse cx="6.8" cy="11.4" rx="1.6" ry="1.3" fill="#ffe0a0"/><path d="M8.8,12.2 L10.6,13.8" stroke="#a06810" stroke-width="1.4"/></g><g transform="translate(41,65)"><path d="M5.5,2.5 V15.5 M5.5,7.3 H10 M5.5,13.4 H10" stroke="#5b6470" stroke-width="1.1" fill="none"/><circle cx="5.4" cy="2.6" r="2.4" fill="url(#gGreen)" stroke="#2f7a33" stroke-width="0.7"/><circle cx="10.6" cy="7.3" r="2.4" fill="url(#gGreen)" stroke="#2f7a33" stroke-width="0.7"/><circle cx="10.6" cy="13.4" r="2.4" fill="url(#gGreen)" stroke="#2f7a33" stroke-width="0.7"/></g><g transform="translate(68,65)"><rect x="6.5" y="0.6" width="8.8" height="8.8" rx="1" fill="#e4f2fa" stroke="#7888a8" stroke-width="1.1"/><rect x="8" y="2" width="5.5" height="5.5" rx="1.5" fill="#90bc58"/><rect x="8" y="7" width="5.8" height="1.6" fill="#6a8a30"/><path d="M0.6,5.3 H5.5 V9 H13.5 V15.2 H0.6 Z" fill="#fbeaa4" stroke="#b8964a" stroke-width="0.9"/><path d="M1.2,9.2 H13 V14.7 H1.2 Z" fill="url(#gFolder)"/></g><rect x="95" y="66.5" width="2" height="2" fill="#a0a0a0"/><rect x="95" y="70.5" width="2" height="2" fill="#a0a0a0"/><rect x="95" y="74.5" width="2" height="2" fill="#a0a0a0"/><rect x="95" y="78.5" width="2" height="2" fill="#a0a0a0"/><g transform="translate(108,65)"><path d="M2.9,0.6 H14 C15.3,0.6 15.8,1.8 15.8,2.9 C15.8,4.3 14.8,5.2 13.6,5.2 V15.2 H1.6 C0.7,15.2 0.3,14.3 0.5,13.3 C0.8,12.2 1.5,11.3 2.4,11.3 Z" fill="url(#gScroll)" stroke="#5a7fb0" stroke-width="1.1" stroke-linejoin="round"/><path d="M13.6,5.2 V3.4 C13.6,2.6 14.3,2.4 14.8,2.8" stroke="#5a7fb0" stroke-width="0.9" fill="none"/><path d="M1.8,13.5 H7.5" stroke="#ffffff" stroke-width="1.3"/><path d="M10.3,7 L15.7,15.2 H5.9 Z" fill="#f8de80" stroke="#c49a40" stroke-width="0.9" stroke-linejoin="round"/><path d="M10.3,10 V12.4" stroke="#8a6a18" stroke-width="1.2"/><rect x="9.7" y="13" width="1.2" height="1.1" fill="#8a6a18"/></g><g transform="translate(135,65)"><path d="M2.9,0.6 H14 C15.3,0.6 15.8,1.8 15.8,2.9 C15.8,4.3 14.8,5.2 13.6,5.2 V15.2 H1.6 C0.7,15.2 0.3,14.3 0.5,13.3 C0.8,12.2 1.5,11.3 2.4,11.3 Z" fill="url(#gScroll)" stroke="#5a7fb0" stroke-width="1.1" stroke-linejoin="round"/><path d="M13.6,5.2 V3.4 C13.6,2.6 14.3,2.4 14.8,2.8" stroke="#5a7fb0" stroke-width="0.9" fill="none"/><path d="M1.8,13.5 H7.5" stroke="#ffffff" stroke-width="1.3"/><path d="M10.3,7 L15.7,15.2 H5.9 Z" fill="#f8de80" stroke="#c49a40" stroke-width="0.9" stroke-linejoin="round"/><path d="M10.3,10 V12.4" stroke="#8a6a18" stroke-width="1.2"/><rect x="9.7" y="13" width="1.2" height="1.1" fill="#8a6a18"/></g><g transform="translate(162,65)"><path d="M2.9,0.6 H14 C15.3,0.6 15.8,1.8 15.8,2.9 C15.8,4.3 14.8,5.2 13.6,5.2 V15.2 H1.6 C0.7,15.2 0.3,14.3 0.5,13.3 C0.8,12.2 1.5,11.3 2.4,11.3 Z" fill="url(#gScroll)" stroke="#5a7fb0" stroke-width="1.1" stroke-linejoin="round"/><path d="M13.6,5.2 V3.4 C13.6,2.6 14.3,2.4 14.8,2.8" stroke="#5a7fb0" stroke-width="0.9" fill="none"/><path d="M1.8,13.5 H7.5" stroke="#ffffff" stroke-width="1.3"/><path d="M10.3,7 L15.7,15.2 H5.9 Z" fill="#f8de80" stroke="#c49a40" stroke-width="0.9" stroke-linejoin="round"/><path d="M10.3,10 V12.4" stroke="#8a6a18" stroke-width="1.2"/><rect x="9.7" y="13" width="1.2" height="1.1" fill="#8a6a18"/></g><g transform="translate(189,65)"><path d="M2.9,0.6 H14 C15.3,0.6 15.8,1.8 15.8,2.9 C15.8,4.3 14.8,5.2 13.6,5.2 V15.2 H1.6 C0.7,15.2 0.3,14.3 0.5,13.3 C0.8,12.2 1.5,11.3 2.4,11.3 Z" fill="url(#gScroll)" stroke="#5a7fb0" stroke-width="1.1" stroke-linejoin="round"/><path d="M13.6,5.2 V3.4 C13.6,2.6 14.3,2.4 14.8,2.8" stroke="#5a7fb0" stroke-width="0.9" fill="none"/><path d="M1.8,13.5 H7.5" stroke="#ffffff" stroke-width="1.3"/><path d="M10.3,7 L15.7,15.2 H5.9 Z" fill="#f8de80" stroke="#c49a40" stroke-width="0.9" stroke-linejoin="round"/><path d="M10.3,10 V12.4" stroke="#8a6a18" stroke-width="1.2"/><rect x="9.7" y="13" width="1.2" height="1.1" fill="#8a6a18"/></g><g transform="translate(216,65)"><path d="M2.9,0.6 H14 C15.3,0.6 15.8,1.8 15.8,2.9 C15.8,4.3 14.8,5.2 13.6,5.2 V15.2 H1.6 C0.7,15.2 0.3,14.3 0.5,13.3 C0.8,12.2 1.5,11.3 2.4,11.3 Z" fill="url(#gScroll)" stroke="#5a7fb0" stroke-width="1.1" stroke-linejoin="round"/><path d="M13.6,5.2 V3.4 C13.6,2.6 14.3,2.4 14.8,2.8" stroke="#5a7fb0" stroke-width="0.9" fill="none"/><path d="M1.8,13.5 H7.5" stroke="#ffffff" stroke-width="1.3"/><path d="M15.2,8.4 L8.6,15 L5.8,15.8 L6.6,13 L13.2,6.4 Z" fill="#f5c84a" stroke="#c0862a" stroke-width="0.8"/><path d="M13.2,6.4 L15.2,8.4" stroke="#e88a6a" stroke-width="1.4"/></g><g transform="translate(243,65)"><path d="M2.9,0.6 H14 C15.3,0.6 15.8,1.8 15.8,2.9 C15.8,4.3 14.8,5.2 13.6,5.2 V15.2 H1.6 C0.7,15.2 0.3,14.3 0.5,13.3 C0.8,12.2 1.5,11.3 2.4,11.3 Z" fill="url(#gScroll)" stroke="#5a7fb0" stroke-width="1.1" stroke-linejoin="round"/><path d="M13.6,5.2 V3.4 C13.6,2.6 14.3,2.4 14.8,2.8" stroke="#5a7fb0" stroke-width="0.9" fill="none"/><path d="M1.8,13.5 H7.5" stroke="#ffffff" stroke-width="1.3"/><path d="M10.3,7 L15.7,15.2 H5.9 Z" fill="#f8de80" stroke="#c49a40" stroke-width="0.9" stroke-linejoin="round"/><path d="M10.3,10 V12.4" stroke="#8a6a18" stroke-width="1.2"/><rect x="9.7" y="13" width="1.2" height="1.1" fill="#8a6a18"/></g><g transform="translate(270,65)"><path d="M2.9,0.6 H14 C15.3,0.6 15.8,1.8 15.8,2.9 C15.8,4.3 14.8,5.2 13.6,5.2 V15.2 H1.6 C0.7,15.2 0.3,14.3 0.5,13.3 C0.8,12.2 1.5,11.3 2.4,11.3 Z" fill="url(#gScroll)" stroke="#5a7fb0" stroke-width="1.1" stroke-linejoin="round"/><path d="M13.6,5.2 V3.4 C13.6,2.6 14.3,2.4 14.8,2.8" stroke="#5a7fb0" stroke-width="0.9" fill="none"/><path d="M1.8,13.5 H7.5" stroke="#ffffff" stroke-width="1.3"/><path d="M10.3,7 L15.7,15.2 H5.9 Z" fill="#f8de80" stroke="#c49a40" stroke-width="0.9" stroke-linejoin="round"/><path d="M10.3,10 V12.4" stroke="#8a6a18" stroke-width="1.2"/><rect x="9.7" y="13" width="1.2" height="1.1" fill="#8a6a18"/></g><g transform="translate(297,65)"><path d="M2.9,0.6 H14 C15.3,0.6 15.8,1.8 15.8,2.9 C15.8,4.3 14.8,5.2 13.6,5.2 V15.2 H1.6 C0.7,15.2 0.3,14.3 0.5,13.3 C0.8,12.2 1.5,11.3 2.4,11.3 Z" fill="url(#gScroll)" stroke="#5a7fb0" stroke-width="1.1" stroke-linejoin="round"/><path d="M13.6,5.2 V3.4 C13.6,2.6 14.3,2.4 14.8,2.8" stroke="#5a7fb0" stroke-width="0.9" fill="none"/><path d="M1.8,13.5 H7.5" stroke="#ffffff" stroke-width="1.3"/><path d="M10.3,7 L15.7,15.2 H5.9 Z" fill="#f8de80" stroke="#c49a40" stroke-width="0.9" stroke-linejoin="round"/><path d="M10.3,10 V12.4" stroke="#8a6a18" stroke-width="1.2"/><rect x="9.7" y="13" width="1.2" height="1.1" fill="#8a6a18"/></g><rect x="324" y="66.5" width="2" height="2" fill="#a0a0a0"/><rect x="324" y="70.5" width="2" height="2" fill="#a0a0a0"/><rect x="324" y="74.5" width="2" height="2" fill="#a0a0a0"/><rect x="324" y="78.5" width="2" height="2" fill="#a0a0a0"/><g transform="translate(338,65)"><path d="M9,2 C9,0.8 15.5,0.8 15.5,2 V13 C15.5,14.2 9,14.2 9,13 Z" fill="url(#gCyl)" stroke="#6a6a6a" stroke-width="0.9"/><ellipse cx="12.25" cy="2.2" rx="3.2" ry="1.1" fill="#f8f8f8" stroke="#6a6a6a" stroke-width="0.7"/><rect x="0.5" y="6" width="8" height="9.5" fill="#fff" stroke="#555" stroke-width="0.9"/><path d="M2,8.3 H7 M2,10.3 H7 M2,12.3 H7 M2,14.2 H6" stroke="#555" stroke-width="0.8"/></g><rect x="364" y="66.5" width="2" height="2" fill="#a0a0a0"/><rect x="364" y="70.5" width="2" height="2" fill="#a0a0a0"/><rect x="364" y="74.5" width="2" height="2" fill="#a0a0a0"/><rect x="364" y="78.5" width="2" height="2" fill="#a0a0a0"/><g transform="translate(377,65)"><path d="M0,4 H16 M0,12.2 H16" stroke="#4f7fd0" stroke-width="1"/><rect x="3" y="2.5" width="3" height="3" fill="#c0202a"/><rect x="9.5" y="2.5" width="3" height="3" fill="#c0202a"/><rect x="3" y="10.7" width="3" height="3" fill="#c0202a"/><rect x="9.5" y="10.7" width="3" height="3" fill="#c0202a"/><path d="M7.7,4 V9.5" stroke="#1d9a2a" stroke-width="1.3"/><path d="M5.5,7.5 L7.7,10 L9.9,7.5" stroke="#1d9a2a" stroke-width="1.3" fill="none"/></g><g transform="translate(404,65)"><g fill="url(#gTan)" stroke="#9a5a2a" stroke-width="0.8"><rect x="1" y="1" width="7" height="7"/><rect x="6" y="6" width="9" height="9"/></g><path d="M4.5,0 V8.5 M0,4.5 H8.5 M10.5,5 V16 M5,10.5 H16" stroke="#8a4a20" stroke-width="0.9"/></g><g transform="translate(432,65)"><rect x="0.5" y="0.5" width="11.5" height="11" fill="#f8fafc" stroke="#445a78" stroke-width="0.9"/><rect x="0.5" y="0.5" width="11.5" height="2.3" fill="#4a7fd8"/><circle cx="12" cy="12" r="3.6" fill="#dfe8f3" stroke="#2a4a70" stroke-width="1.2" stroke-dasharray="1.4,0.9"/><path d="M7.5,7 L12.5,12.5" stroke="#2a4a70" stroke-width="1.3"/></g><g transform="translate(458,65)"><rect x="0.5" y="1" width="13.5" height="13.5" fill="#f4f7fb" stroke="#6c8ac0" stroke-width="0.9"/><path d="M2,3 H12.5" stroke="#4a9a4a" stroke-width="0.9"/><path d="M1,6 H13.5 M1,9 H13.5 M1,12 H13.5 M4,5 V14" stroke="#a8bcd8" stroke-width="0.7"/><path d="M15.2,8.4 L8.6,15 L5.8,15.8 L6.6,13 L13.2,6.4 Z" fill="#f5c84a" stroke="#c0862a" stroke-width="0.8"/><path d="M13.2,6.4 L15.2,8.4" stroke="#e88a6a" stroke-width="1.4"/></g><g transform="translate(485,65)"><path d="M1,2 L7,0.8 V14.5 L1,15.5 Z" fill="#f0c860" stroke="#c8a040" stroke-width="0.8"/><path d="M1,3 H11 V15.5 H1 Z" fill="url(#gFolder)" stroke="#c8a040" stroke-width="0.8"/><rect x="7" y="3.5" width="7" height="10" fill="#eef3fb" stroke="#8aa0c8" stroke-width="0.8"/><rect x="6" y="8" width="3" height="5" fill="#e0b030"/></g><g transform="translate(512,65)"><g fill="#6c7aa6"><rect x="0.5" y="3" width="3" height="3"/><rect x="0.5" y="7" width="3" height="3"/><rect x="0.5" y="11" width="3" height="3"/></g><path d="M5.5,4.5 H13 M5.5,8.5 H13 M5.5,12.5 H13" stroke="#6c7aa6" stroke-width="1"/></g><g transform="translate(539,65)"><rect x="0.5" y="0.5" width="13.5" height="13.5" fill="#6fb0e0" stroke="#3a7ab0" stroke-width="1"/><path d="M2,13 L5,3 L9,13 Z" fill="#8cae3a"/><path d="M3,12 L5.5,6 L8,12 Z" fill="#d0702a"/><path d="M15.2,8.4 L8.6,15 L5.8,15.8 L6.6,13 L13.2,6.4 Z" fill="#f5c84a" stroke="#c0862a" stroke-width="0.8"/><path d="M13.2,6.4 L15.2,8.4" stroke="#e88a6a" stroke-width="1.4"/></g><g transform="translate(566,65)"><g fill="#fafafa" stroke="#a8a8a8" stroke-width="0.9"><path d="M0.5,0.5 H6 L8,2.5 V10 H0.5 Z"/><path d="M3.5,2.5 H9 L11,4.5 V12.5 H3.5 Z"/><path d="M6.5,5 H12.5 L15,7.5 V15.5 H6.5 Z"/></g></g><g transform="translate(593,65)"><circle cx="11" cy="6" r="4.8" fill="#eef4fb" stroke="#2f5a90" stroke-width="1.1"/><path d="M10.8,3 V6.5 L12,8" stroke="#2f5a90" stroke-width="0.9" fill="none"/><rect x="0.5" y="5" width="8.5" height="10.5" fill="#fff" stroke="#2f5a90" stroke-width="0.9"/><rect x="0.5" y="5" width="8.5" height="2.4" fill="#2f5a90"/><text x="1.6" y="14.2" font-family="Liberation Sans" font-weight="bold" font-size="6.5" fill="#2f5a90">12</text></g><g transform="translate(620,65)"><rect x="0.5" y="1" width="5" height="14.5" fill="#f4f7fb" stroke="#6c8ac0" stroke-width="0.9"/><rect x="10.5" y="1" width="5" height="14.5" fill="#f4f7fb" stroke="#6c8ac0" stroke-width="0.9"/><path d="M1.5,4 H4.5 M1.5,7 H4.5 M11.5,4 H14.5 M11.5,7 H14.5" stroke="#8aa0c0" stroke-width="0.7"/><path d="M3,12.5 L6.5,10.5 L13,4.5" stroke="#3aa044" stroke-width="1.8" fill="none"/></g><g transform="translate(647,65)"><path d="M3,0.5 H10 L12.5,3 V6 H3 Z" fill="#fbf3dc" stroke="#a08850" stroke-width="0.9"/><rect x="0.5" y="6" width="15" height="5.2" rx="1" fill="#e8eef8" stroke="#3a5a90" stroke-width="1"/><rect x="2.5" y="11" width="11" height="4.5" fill="#f6f0dc" stroke="#a08850" stroke-width="0.9"/><path d="M5,8.6 H11 M5,13.2 H11" stroke="#3a5a90" stroke-width="0.7"/></g><g transform="translate(674,65)"><path d="M0.5,6.5 H4 V4.5 L7,7.5 L4,10.5 V8.5 H0.5 Z" fill="#f6d040" stroke="#c49a20" stroke-width="0.7"/><path d="M10,2 V15 M10,10 H12 M10,14 H12" stroke="#3a5a90" stroke-width="1"/><path d="M8,3.6 L10,0.8 L12,3.6 Z" fill="#3a5a90"/><path d="M13,3 H15.5" stroke="#6a7a90" stroke-width="0.8"/><rect x="12" y="8.5" width="3" height="3" fill="#fde0e0" stroke="#d03040" stroke-width="0.8"/><rect x="12" y="12.5" width="3" height="3" fill="#fde0e0" stroke="#d03040" stroke-width="0.8"/></g><g transform="translate(701,65)"><rect x="8" y="0.5" width="7.5" height="12" fill="#e8e8e8" stroke="#8a8a8a" stroke-width="0.9"/><rect x="0.5" y="3.5" width="12" height="10" fill="#d8dce2" stroke="#808890" stroke-width="0.9"/><rect x="2" y="5" width="8.5" height="6" fill="#5f8fd0"/><path d="M15.2,8.4 L8.6,15 L5.8,15.8 L6.6,13 L13.2,6.4 Z" fill="#f5c84a" stroke="#c0862a" stroke-width="0.8"/><path d="M13.2,6.4 L15.2,8.4" stroke="#e88a6a" stroke-width="1.4"/></g><g transform="translate(728,65)"><circle cx="10.5" cy="3" r="2.6" fill="#f2c060" stroke="#c09040" stroke-width="0.7"/><circle cx="4" cy="7.8" r="2.5" fill="#e0a070" stroke="#8a5030" stroke-width="0.7"/><path d="M0.5,15.5 C0.5,11 2,10.5 4,10.5 C6,10.5 7.5,11 7.5,15.5 Z" fill="#5a8ad0" stroke="#3a5a90" stroke-width="0.7"/><path d="M15.2,8.4 L8.6,15 L5.8,15.8 L6.6,13 L13.2,6.4 Z" fill="#f5c84a" stroke="#c0862a" stroke-width="0.8"/><path d="M13.2,6.4 L15.2,8.4" stroke="#e88a6a" stroke-width="1.4"/></g><g transform="translate(755,65)"><path d="M0.5,0.5 H14.5 V10 L10,15.5 H0.5 Z" fill="#fafafa" stroke="#b8b8b8" stroke-width="0.9"/><path d="M10,15.5 V10 H14.5" fill="#eaeaea" stroke="#b8b8b8" stroke-width="0.9"/><path d="M5,5 C5,2.5 10,2.5 10,5 C10,7 7.5,7 7.5,9" stroke="#dcdcdc" stroke-width="1" fill="none"/></g><path d="M1892,66.5 H1912 M1892,73.3 H1912 M1892,80 H1912" stroke="#222" stroke-width="1.4"/><path d="M1836,17.5 H1844" stroke="#333" stroke-width="1.6"/><rect x="1867.3" y="12.4" width="7.3" height="7.2" fill="none" stroke="#333" stroke-width="1.3"/><path d="M1869.3,10.5 H1876.5 V17.5" fill="none" stroke="#555" stroke-width="1"/><circle cx="1904.2" cy="14.9" r="8.8" fill="#8cba69"/><path d="M1900.3,11 L1908.1,18.8 M1908.1,11 L1900.3,18.8" stroke="#f4faf0" stroke-width="1.2"/></svg>
<svg class="a" style="left:0;top:86px" width="1920" height="40" viewBox="0 86 1920 40"><g transform="translate(39,98)"><rect x="0.5" y="0.5" width="14" height="11.5" fill="#f4f8fc" stroke="#5a84c0" stroke-width="1"/><rect x="0.5" y="0.5" width="14" height="2" fill="#6a94d0"/><rect x="2.5" y="4" width="2.6" height="2.6" fill="#7aaae0"/><rect x="6.2" y="4" width="2.6" height="2.6" fill="#5aa84a"/><rect x="9.9" y="4" width="2.6" height="2.6" fill="#7aaae0"/><rect x="2.5" y="7.6" width="2.6" height="2.6" fill="#5aa84a"/><rect x="6.2" y="7.6" width="2.6" height="2.6" fill="#e8703a"/><rect x="9.9" y="7.6" width="2.6" height="2.6" fill="#d8c84a"/></g><path d="M341.2,101.2 L350,110 M350,101.2 L341.2,110" stroke="#333" stroke-width="1.1"/><g transform="translate(1553,96.5)"><rect x="0.5" y="1" width="13.5" height="13.5" fill="#f4f7fb" stroke="#6c8ac0" stroke-width="0.9"/><path d="M2,3 H12.5" stroke="#4a9a4a" stroke-width="0.9"/><path d="M1,6 H13.5 M1,9 H13.5 M1,12 H13.5 M4,5 V14" stroke="#a8bcd8" stroke-width="0.7"/><path d="M15.2,8.4 L8.6,15 L5.8,15.8 L6.6,13 L13.2,6.4 Z" fill="#f5c84a" stroke="#c0862a" stroke-width="0.8"/><path d="M13.2,6.4 L15.2,8.4" stroke="#e88a6a" stroke-width="1.4"/></g><g transform="translate(1580,96.5)"><path d="M0.5,0.5 H13 L15,2.5 V15.5 H0.5 Z" fill="#e8edf3" stroke="#b0bccb" stroke-width="0.9"/><rect x="3.5" y="0.5" width="8" height="5" fill="#f6f8fb" stroke="#b0bccb" stroke-width="0.8"/><rect x="3.5" y="9.5" width="8.5" height="6" fill="#f6f8fb" stroke="#b0bccb" stroke-width="0.8"/></g><g transform="translate(1620.5,96.5)"><path d="M0.5,8 H10 M6.5,4.5 L10,8 L6.5,11.5" stroke="#505050" stroke-width="1.5" fill="none"/><path d="M13,2 V14" stroke="#505050" stroke-width="1.8"/></g><g transform="translate(1647.5,96.5)"><path d="M4,8 H12.5 M7.5,4.5 L4,8 L7.5,11.5" stroke="#b4b4b4" stroke-width="1.3" fill="none"/><path d="M13.5,2 V14" stroke="#b4b4b4" stroke-width="1.5"/></g><g transform="translate(1685.5,96.5)"><rect x="2.5" y="0.5" width="13.5" height="13" fill="#f6f8fc" stroke="#5a6aa0" stroke-width="1"/><rect x="2.5" y="0.5" width="13.5" height="2.5" fill="#6a7ab0"/><path d="M3,6 H15.5 M3,9 H15.5 M3,12 H15.5 M6.5,3 V13.5" stroke="#9aaad0" stroke-width="0.7"/><path d="M0.5,12 H4.5 L0.5,16 Z" fill="#2a6ab0"/></g><g transform="translate(1713.5,96.5)"><rect x="0.6" y="0.6" width="13.8" height="14" fill="#e8f4fb" stroke="#586878" stroke-width="1.1"/><rect x="2.2" y="2.2" width="10.6" height="4.5" fill="#4a86d0"/><rect x="2.2" y="6.5" width="10.6" height="6.5" fill="#cfe6f6"/><path d="M3.5,5 C5,4.5 6,6 7,8 L9.5,12.5 L7.5,13 L4.5,8.5 Z" fill="#b84848"/><circle cx="4.8" cy="4.8" r="1.3" fill="#8a5a40"/><rect x="10" y="9.5" width="2.6" height="3.8" fill="#3a6a50"/></g><g transform="translate(1753,96.5)"><rect x="1.5" y="2.5" width="13" height="10" fill="#404040" stroke="#8a8a8a" stroke-width="1"/><g fill="#8a8a8a"><rect x="0" y="1" width="2.5" height="2.5"/><rect x="13.5" y="1" width="2.5" height="2.5"/><rect x="0" y="11.5" width="2.5" height="2.5"/><rect x="13.5" y="11.5" width="2.5" height="2.5"/></g></g><g transform="translate(1794,96.5)"><path d="M4.8,4.6 L8.6,0.8 L10,2.8 C12,3.6 13.4,5.2 13.8,7.6 L14.2,11.2 L11.6,8.4 C11,7.2 10.2,6.6 9.4,6.4 L8.6,8.6 Z" fill="#f4d050" stroke="#b08018" stroke-width="0.9" stroke-linejoin="round"/><path d="M1.4,5.4 L4.4,8.2 C5,9.4 5.8,10 6.6,10.2 L7.4,8 L11.2,12 L7.4,15.6 L6,13.6 C4,12.8 2.6,11.2 2.2,8.8 Z" fill="#f4d050" stroke="#b08018" stroke-width="0.9" stroke-linejoin="round"/></g><circle cx="1836.3" cy="98.7" r="1.8" fill="none" stroke="#666" stroke-width="0.9"/><circle cx="1836.3" cy="104" r="1.8" fill="none" stroke="#666" stroke-width="0.9"/><circle cx="1836.3" cy="109.3" r="1.8" fill="none" stroke="#666" stroke-width="0.9"/><rect x="1866.75" y="98.75" width="8.5" height="2.5" fill="#fff" stroke="#111" stroke-width="1.5"/><rect x="1893.75" y="98.75" width="8.5" height="8.5" fill="#f0f0f0" stroke="#111" stroke-width="1.5"/><path d="M1894,100.75 H1902" stroke="#111" stroke-width="1"/></svg>
<svg class="a" style="left:0;top:86px" width="36" height="60" viewBox="0 86 36 60"><defs>
<linearGradient id="LGold" x1="0" y1="0" x2="1" y2="1"><stop offset="0" stop-color="#ffe27a"/><stop offset="1" stop-color="#d99a18"/></linearGradient>
<linearGradient id="LScroll" x1="0" y1="0" x2="1" y2="1"><stop offset="0" stop-color="#f2f7fd"/><stop offset="1" stop-color="#9fc1ec"/></linearGradient>
<linearGradient id="LFolder" x1="0" y1="0" x2="0" y2="1"><stop offset="0" stop-color="#fff0a8"/><stop offset="1" stop-color="#e8c54a"/></linearGradient>
<radialGradient id="LGreen" cx="0.4" cy="0.4" r="0.6"><stop offset="0" stop-color="#8fd08a"/><stop offset="1" stop-color="#3c8d3e"/></radialGradient>
<linearGradient id="LCyl" x1="0" y1="0" x2="1" y2="0"><stop offset="0" stop-color="#f4f4f4"/><stop offset="1" stop-color="#8a8a8a"/></linearGradient>
<linearGradient id="LTan" x1="0" y1="0" x2="1" y2="1"><stop offset="0" stop-color="#f7d3a8"/><stop offset="1" stop-color="#dba070"/></linearGradient>
</defs><rect x="9.5" y="90.8" width="2" height="2" fill="#a0a0a0"/><rect x="13.9" y="90.8" width="2" height="2" fill="#a0a0a0"/><rect x="18.1" y="90.8" width="2" height="2" fill="#a0a0a0"/><rect x="22.4" y="90.8" width="2" height="2" fill="#a0a0a0"/><rect x="16" y="104.5" width="5.3" height="4" fill="none" stroke="#444" stroke-width="1.1"/><rect x="13.5" y="107" width="5.5" height="4.2" fill="#f5f5f5" stroke="#444" stroke-width="1.1"/><path d="M14.3,127 V141 M14.3,132.4 H18.5 M14.3,138.1 H18.5" stroke="#5b5470" stroke-width="1"/><circle cx="14.5" cy="127" r="2.4" fill="url(#LGreen)" stroke="#2f7a33" stroke-width="0.7"/><circle cx="19.7" cy="132.4" r="2.4" fill="url(#LGreen)" stroke="#2f7a33" stroke-width="0.7"/><circle cx="19.7" cy="138.1" r="2.4" fill="url(#LGreen)" stroke="#2f7a33" stroke-width="0.7"/></svg>
<svg class="a" style="left:550px;top:610px" width="40" height="40" viewBox="550 610 40 40"><path d="M567.6,623 V639.6 L571.2,636 L573.6,640.6 C574.1,641.4 575.4,641.3 575.9,640.5 L573.9,635.1 L578.3,634.8 Z" fill="#fff" stroke="#000" stroke-width="1.15" stroke-linejoin="round"/></svg><svg class="a" style="left:1010px;top:1020px" width="640" height="33" viewBox="1010 1020 640 33"><path d="M1028.5,1034 V1031.5 C1028.5,1028.3 1037.2,1028.3 1037.2,1031.5 V1034" fill="none" stroke="#a8a8a8" stroke-width="1.8"/><rect x="1026.5" y="1033.5" width="13" height="9.2" fill="#f6d258" stroke="#c89a30" stroke-width="0.9"/><path d="M1028.5,1036.5 H1031 M1028.5,1039 H1031 M1035.5,1036.5 H1038 M1035.5,1039 H1038" stroke="#d8a838" stroke-width="0.8"/><rect x="1032.3" y="1035.8" width="1.6" height="3.2" fill="#a87010"/><rect x="1635.5" y="1030" width="1.5" height="2" fill="#aaa"/><rect x="1635.5" y="1034" width="1.5" height="2" fill="#aaa"/><rect x="1635.5" y="1038" width="1.5" height="2" fill="#aaa"/><rect x="1635.5" y="1042" width="1.5" height="2" fill="#aaa"/></svg>
</body></html>
